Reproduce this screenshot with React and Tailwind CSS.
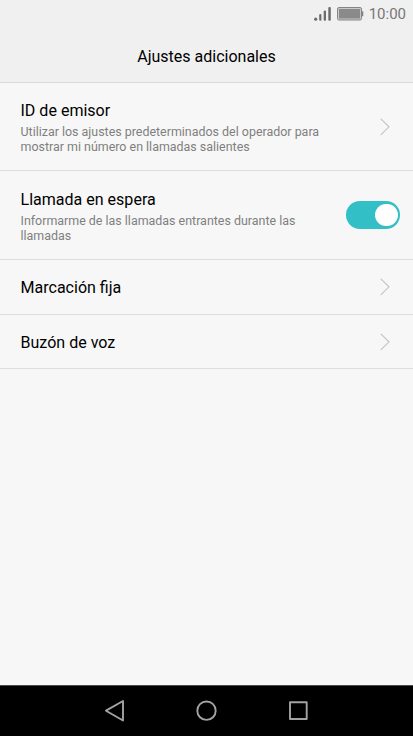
import React from 'react';

const Chevron = () => (
  <svg className="mr-[22px] h-[18px] w-[11px] shrink-0" viewBox="0 0 11 18" fill="none" stroke="#c2c2c2" strokeWidth="1.1">
    <path d="M.8 .8 9 8.800 .8 16.800" />
  </svg>
);

const Toggle = () => (
  <button role="switch" aria-checked="true" className="mr-[13px] flex h-[28px] w-[54px] shrink-0 items-center justify-end rounded-full bg-[#32bfc6] pr-[2.5px]">
    <span className="size-[22.5px] rounded-full bg-white" />
  </button>
);

const items = [
  {
    title: 'ID de emisor',
    lines: ['Utilizar los ajustes predeterminados del operador para', 'mostrar mi número en llamadas salientes'],
    size: 'h-[88px]',
    titleHeight: 'leading-[21px] pb-px -mt-px',
  },
  {
    title: 'Llamada en espera',
    lines: ['Informarme de las llamadas entrantes durante las', 'llamadas'],
    size: 'h-[89px]',
    titleHeight: 'leading-[22px]',
    toggle: true,
  },
  { title: 'Marcación fija', size: 'h-[55px]', titleHeight: 'leading-[22px]' },
  { title: 'Buzón de voz', size: 'h-[54px]', titleHeight: 'leading-[22px]' },
];

const Row = ({ title, lines, size, titleHeight, toggle }) => (
  <li className={`flex items-center justify-between border-b border-[#dedede] pl-[20.5px] ${size}`}>
    <div className="pt-[2px]">
      <h2 className={`text-[16.05px] text-black ${titleHeight}`}>{title}</h2>
      {lines && (
        <p className="mt-[3px] text-[12.44px] leading-[14.5px] whitespace-nowrap text-[#7f7f7f]">
          {lines[0]}
          <br />
          {lines[1]}
        </p>
      )}
    </div>
    {toggle ? <Toggle /> : <Chevron />}
  </li>
);

const StatusBar = () => (
  <div className="flex h-[28px] items-center justify-end pr-[7px] text-[#777777]">
    <svg className="h-[14px] w-[18px]" viewBox="0 0 18 14" fill="#6c6c6c">
      <circle cx="1.700" cy="12.200" r="1.600" />
      <rect x="5.200" y="7" width="2.200" height="6.800" rx="1" />
      <rect x="9.700" y="3.500" width="2.300" height="10.300" rx="1" />
      <rect x="14.300" y="0" width="2.500" height="13.800" rx="1" />
    </svg>
    <svg className="ml-[5.5px] h-[14px] w-[27px]" viewBox="0 0 27 14">
      <rect x=".5" y=".5" width="24" height="12.500" rx="1.500" fill="#c9c9c9" stroke="#858585" />
      <rect x="2" y="2" width="21" height="9.500" fill="#8a8a8a" />
      <path d="M25 4.200h1.300v5H25z" fill="#858585" />
    </svg>
    <span className="ml-[4.5px] text-[15px]">10:00</span>
  </div>
);

const NavBar = () => (
  <nav className="h-[51px] border-t border-[#4a4a4a] bg-black">
    <svg className="h-[50px] w-[413px]" viewBox="0 1 413 50" fill="none" stroke="#a3a3a3" strokeWidth="1.9" strokeLinejoin="round">
      <path d="M123 16v19.500L106 25.700z" />
      <circle cx="206.500" cy="25.700" r="9.200" />
      <rect x="290" y="17.300" width="16.700" height="16.700" />
    </svg>
  </nav>
);

export default function App() {
  return (
    <div className="flex h-[736px] w-[413px] flex-col overflow-hidden bg-[#f7f7f7] font-['Roboto',sans-serif]">
      <header className="h-[83px] border-b border-[#dadada] bg-[#f0f0f0]">
        <StatusBar />
        <h1 className="text-center text-[16px] leading-[58px] text-black">Ajustes adicionales</h1>
      </header>
      <ul className="flex-1">
        {items.map((item) => (
          <Row key={item.title} {...item} />
        ))}
      </ul>
      <NavBar />
    </div>
  );
}
